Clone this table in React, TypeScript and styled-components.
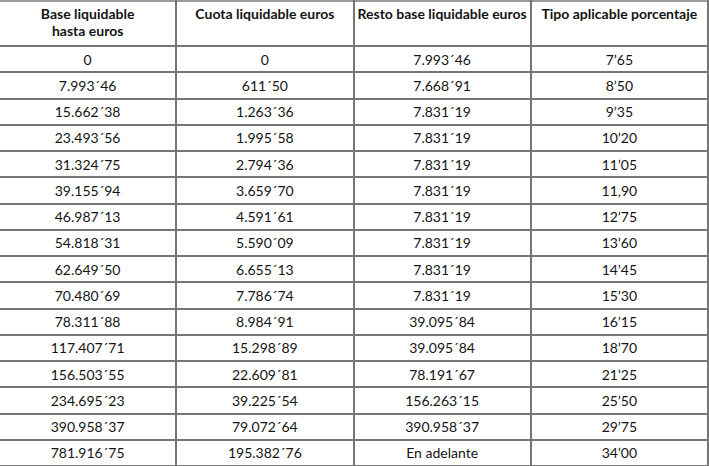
import React from "react";
import styled, { createGlobalStyle } from "styled-components";

const Global = createGlobalStyle`
  html, body { margin: 0; padding: 0; background: #ffffff; overflow: hidden; }
  body { width: 709px; height: 466px; }
`;

const Page = styled.div`
  width: 709px;
  height: 466px;
  overflow: hidden;
  background: #ffffff;
`;

const Table = styled.table`
  border-collapse: collapse;
  table-layout: fixed;
  width: 711px;
  margin-left: -2px;
  font-family: "Lato", "Liberation Sans", sans-serif;
  color: #141414;
`;

const HeadCell = styled.th`
  border: 2px solid #767676;
  border-top-color: #9a9a9a;
  height: 45px;
  padding: 3px 2px 0;
  vertical-align: top;
  text-align: center;
  font-size: 14px;
  font-weight: 700;
  line-height: 17px;
  box-sizing: border-box;
`;

const Row = styled.tr`
  height: 26.25px;
`;

const Cell = styled.td`
  border: 2px solid #767676;
  padding: 0 2px;
  text-align: center;
  vertical-align: middle;
  font-size: 14px;
  font-weight: 400;
  line-height: 17px;
`;

const rows: [string, string, string, string][] = [
  ["0", "0", "7.993´46", "7’65"],
  ["7.993´46", "611´50", "7.668´91", "8’50"],
  ["15.662´38", "1.263´36", "7.831´19", "9’35"],
  ["23.493´56", "1.995´58", "7.831´19", "10’20"],
  ["31.324´75", "2.794´36", "7.831´19", "11’05"],
  ["39.155´94", "3.659´70", "7.831´19", "11,90"],
  ["46.987´13", "4.591´61", "7.831´19", "12’75"],
  ["54.818´31", "5.590´09", "7.831´19", "13’60"],
  ["62.649´50", "6.655´13", "7.831´19", "14’45"],
  ["70.480´69", "7.786´74", "7.831´19", "15’30"],
  ["78.311´88", "8.984´91", "39.095´84", "16’15"],
  ["117.407´71", "15.298´89", "39.095´84", "18’70"],
  ["156.503´55", "22.609´81", "78.191´67", "21’25"],
  ["234.695´23", "39.225´54", "156.263´15", "25’50"],
  ["390.958´37", "79.072´64", "390.958´37", "29’75"],
  ["781.916´75", "195.382´76", "En adelante", "34’00"],
];

export default function App() {
  return (
    <Page>
      <Global />
      <Table>
        <thead>
          <tr>
            <HeadCell>
              Base liquidable
              <br />
              hasta euros
            </HeadCell>
            <HeadCell>Cuota liquidable euros</HeadCell>
            <HeadCell>Resto base liquidable euros</HeadCell>
            <HeadCell>Tipo aplicable porcentaje</HeadCell>
          </tr>
        </thead>
        <tbody>
          {rows.map((r, i) => (
            <Row key={i}>
              {r.map((c, j) => (
                <Cell key={j}>{c}</Cell>
              ))}
            </Row>
          ))}
        </tbody>
      </Table>
    </Page>
  );
}
